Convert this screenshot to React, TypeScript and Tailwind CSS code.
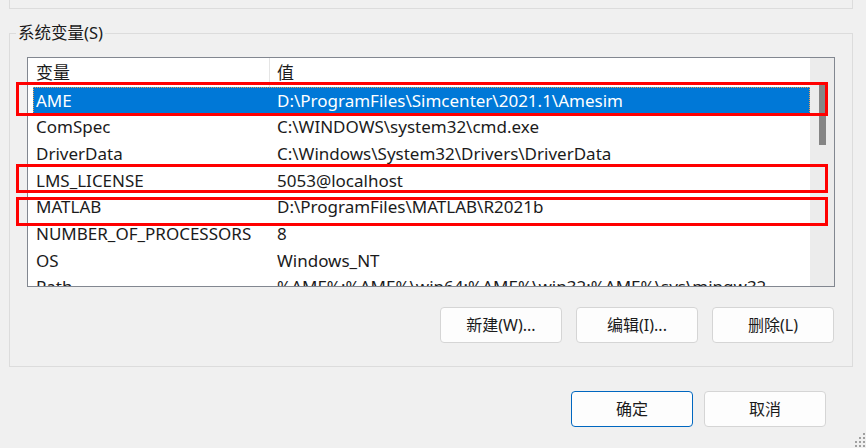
import React from "react";

type EnvVar = {
  name: string;
  value: string;
};

const VARS: EnvVar[] = [
  { name: "AME", value: "D:\\ProgramFiles\\Simcenter\\2021.1\\Amesim" },
  { name: "ComSpec", value: "C:\\WINDOWS\\system32\\cmd.exe" },
  { name: "DriverData", value: "C:\\Windows\\System32\\Drivers\\DriverData" },
  { name: "LMS_LICENSE", value: "5053@localhost" },
  { name: "MATLAB", value: "D:\\ProgramFiles\\MATLAB\\R2021b" },
  { name: "NUMBER_OF_PROCESSORS", value: "8" },
  { name: "OS", value: "Windows_NT" },
  {
    name: "Path",
    value: "%AME%;%AME%\\win64;%AME%\\win32;%AME%\\sys\\mingw32",
  },
];

const FONT = "font-['Noto_Sans','Noto_Sans_CJK_SC',sans-serif]";

function WinButton({ label, primary = false }: { label: string; primary?: boolean }) {
  return (
    <button
      type="button"
      className={`h-[36px] w-[122px] rounded-[4px] bg-[#fdfdfd] text-[16px] text-[#1b1b1b] ${
        primary ? "border border-[#0067c0]" : "border border-[#d5d5d5]"
      }`}
    >
      {label}
    </button>
  );
}

function Grip() {
  const dots = [
    [10, 2],
    [6, 6],
    [10, 6],
    [2, 10],
    [6, 10],
    [10, 10],
    [10, 14],
    [6, 14],
    [2, 14],
  ];
  return (
    <svg width="13" height="17" viewBox="0 0 13 17" className="absolute bottom-0 right-0">
      {dots.map(([x, y]) => (
        <rect key={`${x}-${y}`} x={x} y={y} width="2" height="2" fill="#a0a0a0" />
      ))}
    </svg>
  );
}

export default function App() {
  return (
    <div className={`relative h-[448px] w-[866px] overflow-hidden bg-[#f0f0f0] ${FONT}`}>
      {/* bottom edge of the group above */}
      <div className="ml-[9px] h-[9px] w-[844px] border-x border-b border-[#dcdcdc]" />

      <div className="relative ml-[9px] mt-[24px] h-[334px] w-[844px] border border-[#dcdcdc] pl-[17px] pt-[23px]">
        <span className="absolute left-[6px] top-[-11px] bg-[#f0f0f0] px-[2px] text-[16.5px] leading-[20px] text-[#1b1b1b]">
          系统变量(S)
        </span>

        <div className="flex h-[230px] w-[808px] border border-[#828790] bg-white">
          <div className="flex-1 overflow-hidden">
            <div className="flex h-[29px] items-center text-[17px] text-[#1b1b1b]">
              <div className="w-[241px] shrink-0 pl-[8px]">变量</div>
              <div className="h-full w-px shrink-0 bg-[#e5e5e5]" />
              <div className="pl-[7px]">值</div>
            </div>
            {VARS.map((v, i) => (
              <div
                key={v.name}
                className={`ml-[5px] flex h-[26.67px] items-center whitespace-nowrap text-[17px] ${
                  i === 0
                    ? "bg-[#0078d7] text-white outline-1 -outline-offset-1 outline-dotted outline-[#f0a050]"
                    : "text-[#1b1b1b]"
                }`}
              >
                <div className="w-[244px] shrink-0 pl-[3px]">{v.name}</div>
                <div className="shrink-0">{v.value}</div>
              </div>
            ))}
          </div>
          <div className="relative w-[24px] shrink-0 bg-[#ececec]">
            <div className="absolute left-[9px] top-[26px] h-[61px] w-[7px] bg-[#858585]" />
          </div>
        </div>

        <div className="mt-[20px] flex w-[808px] justify-end gap-[14px] pr-[1px]">
          <WinButton label="新建(W)..." />
          <WinButton label="编辑(I)..." />
          <WinButton label="删除(L)" />
        </div>
      </div>

      <div className="mt-[24px] flex justify-end gap-[11px] pr-[40px]">
        <WinButton label="确定" primary />
        <WinButton label="取消" />
      </div>

      {/* red annotation boxes */}
      <div className="absolute left-[16px] top-[82px] h-[34px] w-[812px] border-[3px] border-[#ff0000]" />
      <div className="absolute left-[16px] top-[164px] h-[29px] w-[812px] border-[3px] border-[#ff0000]" />
      <div className="absolute left-[16px] top-[197px] h-[29px] w-[812px] border-[3px] border-[#ff0000]" />

      <Grip />
    </div>
  );
}
